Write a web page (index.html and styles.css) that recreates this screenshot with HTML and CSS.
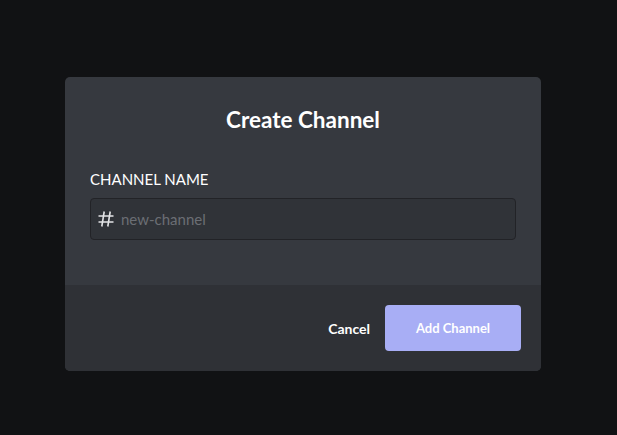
FILE: index.html
```html
<!DOCTYPE html>
<html lang="en">
<head>
<meta charset="utf-8">
<title>Create Channel</title>
<link rel="stylesheet" href="styles.css">
</head>
<body>
<div class="backdrop">
  <div class="modal">
    <div class="modal-body">
      <h1 class="title">Create Channel</h1>
      <label class="label" for="name">CHANNEL NAME</label>
      <div class="input">
        <svg class="hash" width="16" height="16" viewBox="0 0 16 16" aria-hidden="true">
          <g stroke="#e3e4e6" stroke-width="1.6" stroke-linecap="butt" fill="none">
            <line x1="6.2" y1="0.5" x2="3.8" y2="15.5"/>
            <line x1="12.2" y1="0.5" x2="9.8" y2="15.5"/>
            <line x1="0.5" y1="5" x2="15.5" y2="5"/>
            <line x1="0.5" y1="11" x2="15.5" y2="11"/>
          </g>
        </svg>
        <input id="name" class="field" type="text" placeholder="new-channel">
      </div>
    </div>
    <div class="modal-footer">
      <button class="btn-cancel" type="button">Cancel</button>
      <button class="btn-add" type="button">Add Channel</button>
    </div>
  </div>
</div>
</body>
</html>
```

FILE: styles.css
```css
* { box-sizing: border-box; }
html, body { margin: 0; padding: 0; }
body {
  background: #111214;
  font-family: Lato, "Noto Sans", sans-serif;
  width: 617px;
  height: 435px;
  overflow: hidden;
}
.backdrop {
  padding: 77px 0 0 65px;
}
.modal {
  width: 476px;
  height: 294px;
  border-radius: 5px;
  overflow: hidden;
  background: #36393f;
  display: flex;
  flex-direction: column;
}
.modal-body {
  height: 208px;
  padding: 0 25px;
  display: flex;
  flex-direction: column;
}
.title {
  margin: 28px 0 0 0;
  font-size: 22.5px;
  line-height: 30px;
  font-weight: 700;
  color: #ffffff;
  text-align: center;
}
.label {
  margin-top: 34px;
  font-size: 15px;
  line-height: 20px;
  color: #ffffff;
  font-weight: 400;
}
.input {
  margin-top: 9px;
  height: 42px;
  width: 426px;
  border: 1px solid #222327;
  border-radius: 4px;
  background: #303338;
  display: flex;
  align-items: center;
  padding-left: 7px;
}
.hash {
  flex: none;
  margin-right: 7px;
}
.field {
  flex: 1;
  background: transparent;
  border: 0;
  outline: 0;
  font-family: Lato, sans-serif;
  font-size: 15px;
  color: #dcddde;
  padding: 0;
}
.field::placeholder { color: #6b6e74; }
.modal-footer {
  flex: 1;
  background: #2f3136;
  display: flex;
  justify-content: flex-end;
  align-items: center;
  padding: 0 20px 0 0;
  gap: 15px;
}
.btn-cancel {
  background: transparent;
  border: 0;
  color: #ffffff;
  font-family: Lato, sans-serif;
  font-weight: 700;
  font-size: 14px;
  padding: 0;
}
.btn-add {
  width: 136px;
  height: 46px;
  border: 0;
  border-radius: 4px;
  background: #a8aef5;
  color: #ffffff;
  font-family: Lato, sans-serif;
  font-weight: 700;
  font-size: 13px;
}
```
